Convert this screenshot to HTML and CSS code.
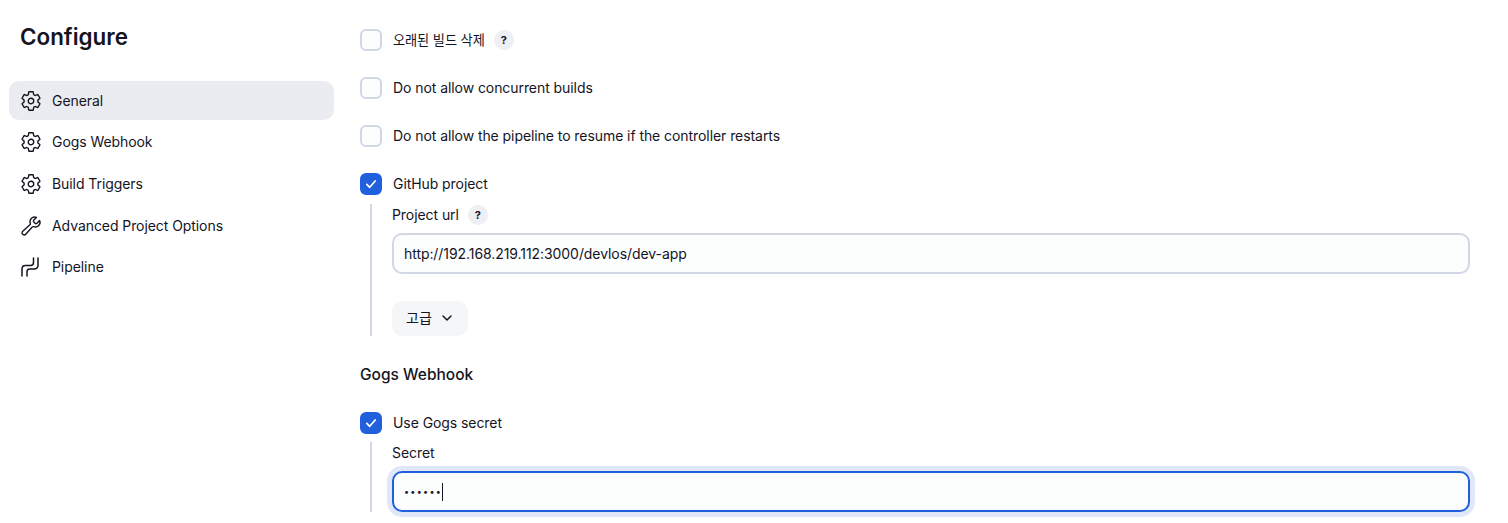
FILE: index.html
```html
<!DOCTYPE html>
<html lang="ko">

<head>
  <meta charset="UTF-8">
  <meta name="viewport" content="width=device-width, initial-scale=1.0">
  <title>Configure</title>
  <link rel="stylesheet" href="styles.css">
</head>

<body>
  <svg class="defs" width="0" height="0" aria-hidden="true">
    <symbol id="icon-gear" viewBox="0 0 512 512">
      <path d="M262.29 192.31a64 64 0 1057.4 57.4 64.13 64.13 0 00-57.4-57.4zM416.39 256a154.34 154.34 0 01-1.53 20.79l45.21 35.46a10.81 10.81 0 012.45 13.75l-42.77 74a10.81 10.81 0 01-13.14 4.59l-44.9-18.08a16.11 16.11 0 00-15.17 1.75A164.48 164.48 0 01325 400.8a15.94 15.94 0 00-8.82 12.14l-6.73 47.89a11.08 11.08 0 01-10.68 9.17h-85.54a11.11 11.11 0 01-10.69-8.87l-6.72-47.82a16.07 16.07 0 00-9-12.22 155.3 155.3 0 01-21.46-12.57 16 16 0 00-15.11-1.71l-44.89 18.07a10.81 10.81 0 01-13.14-4.58l-42.77-74a10.8 10.8 0 012.45-13.75l38.21-30a16.05 16.05 0 006-14.08c-.36-4.17-.58-8.33-.58-12.5s.21-8.27.58-12.35a16 16 0 00-6.07-13.94l-38.19-30A10.81 10.81 0 0149.48 186l42.77-74a10.81 10.81 0 0113.14-4.59l44.9 18.08a16.11 16.11 0 0015.17-1.75A164.48 164.48 0 01187 111.2a15.94 15.94 0 008.82-12.14l6.73-47.89A11.08 11.08 0 01213.23 42h85.54a11.11 11.11 0 0110.69 8.87l6.72 47.82a16.07 16.07 0 009 12.22 155.3 155.3 0 0121.46 12.57 16 16 0 0015.11 1.71l44.89-18.07a10.81 10.81 0 0113.14 4.58l42.77 74a10.8 10.8 0 01-2.45 13.75l-38.21 30a16.05 16.05 0 00-6.05 14.08c.33 4.14.55 8.3.55 12.47z" />
    </symbol>
    <symbol id="icon-check" viewBox="0 0 22 22">
      <path d="M6.8 11.4l2.9 2.9 5.5-6.3" />
    </symbol>
  </svg>

  <div class="page">
    <aside class="sidebar">
      <h1>Configure</h1>
      <nav class="side-nav">
        <a class="nav-item active">
          <svg class="nav-icon"><use href="#icon-gear" /></svg>
          General
        </a>
        <a class="nav-item">
          <svg class="nav-icon"><use href="#icon-gear" /></svg>
          Gogs Webhook
        </a>
        <a class="nav-item">
          <svg class="nav-icon"><use href="#icon-gear" /></svg>
          Build Triggers
        </a>
        <a class="nav-item">
          <svg class="nav-icon" viewBox="0 0 512 512">
            <path d="M393.87 190a32.1 32.1 0 01-45.25 0l-26.57-26.57a32.09 32.09 0 010-45.26L382.19 58a1 1 0 00-.3-1.64c-38.82-16.64-89.15-8.16-121.11 23.57-30.58 30.35-32.32 76-21.12 115.84a31.93 31.93 0 01-9.06 32.08L64 380a48.17 48.17 0 1068 68l153.86-167a31.93 31.93 0 0131.6-9.13c39.54 10.59 84.54 8.6 114.72-21.19 32.49-32 39.5-88.56 23.75-120.93a1 1 0 00-1.6-.26z" />
          </svg>
          Advanced Project Options
        </a>
        <a class="nav-item">
          <svg class="nav-icon pipeline-icon" viewBox="0 0 22 22">
            <path d="M13.5 2v4.5q0 3-3 3H5.5q-3.5 0-3.5 3.5v7" />
            <path d="M18 2v7q0 4-4 4H9.5Q7 13 7 15.8V20" />
          </svg>
          Pipeline
        </a>
      </nav>
    </aside>

    <main class="content">
      <label class="check-row">
        <span class="checkbox"></span>
        <span class="ko-label">오래된 빌드 삭제</span>
        <span class="help">?</span>
      </label>
      <label class="check-row">
        <span class="checkbox"></span>
        <span>Do not allow concurrent builds</span>
      </label>
      <label class="check-row">
        <span class="checkbox"></span>
        <span>Do not allow the pipeline to resume if the controller restarts</span>
      </label>
      <label class="check-row">
        <span class="checkbox checked"><svg><use href="#icon-check" /></svg></span>
        <span>GitHub project</span>
      </label>

      <div class="nested nested-project">
        <div class="field-label">
          <span>Project url</span>
          <span class="help">?</span>
        </div>
        <div class="text-input">http://192.168.219.112:3000/devlos/dev-app</div>
        <button class="advanced-btn">
          고급
          <svg viewBox="0 0 12 12"><path d="M2 4l4 4 4-4" /></svg>
        </button>
      </div>

      <h2>Gogs Webhook</h2>

      <label class="check-row">
        <span class="checkbox checked"><svg><use href="#icon-check" /></svg></span>
        <span>Use Gogs secret</span>
      </label>

      <div class="nested nested-secret">
        <div class="field-label">
          <span>Secret</span>
        </div>
        <div class="text-input focused"><span class="dots">••••••</span><span class="caret"></span></div>
      </div>
    </main>
  </div>
</body>

</html>
```

FILE: styles.css
```css
* {
  box-sizing: border-box;
}

html,
body {
  height: 523px;
  overflow: hidden;
}

body {
  margin: 0;
  font-family: Inter, "Noto Sans CJK KR", sans-serif;
  font-size: 14px;
  font-weight: 400;
  letter-spacing: -0.07px;
  line-height: 22px;
  color: #14141f;
  background-color: #fff;
}

.defs {
  position: absolute;
}

.page {
  display: flex;
}

/* sidebar */
.sidebar {
  width: 325px;
  margin-left: 9px;
  flex: none;
}

h1 {
  margin: 20px 0 27px 11px;
  font-size: 22.4px;
  font-weight: 600;
  letter-spacing: 0;
  line-height: 34px;
}

.side-nav {
  display: flex;
  flex-direction: column;
  gap: 2.7px;
}

.nav-item {
  display: flex;
  align-items: center;
  gap: 10px;
  height: 39px;
  padding-left: 11px;
  border-radius: 10px;
}

.nav-item.active {
  background-color: #ebecf1;
}

.nav-icon {
  width: 22px;
  height: 22px;
  flex: none;
  fill: none;
  stroke: #14141f;
  stroke-width: 32;
  stroke-linecap: round;
  stroke-linejoin: round;
}

.pipeline-icon {
  stroke-width: 1.5;
}

/* main column */
.content {
  flex: 1;
  margin-left: 26px;
  margin-right: 38px;
  padding-top: 29px;
}

.check-row {
  display: flex;
  align-items: center;
  height: 22px;
  margin-bottom: 26px;
}

.checkbox {
  width: 22px;
  height: 22px;
  margin-right: 11px;
  flex: none;
  background-color: #fcfdfd;
  border: 2px solid #d2d7e5;
  border-radius: 6px;
}

.checkbox.checked {
  background-color: #2160dd;
  border-color: #2160dd;
}

.checkbox svg {
  display: block;
  width: 22px;
  height: 22px;
  margin: -2px;
  fill: none;
  stroke: #fff;
  stroke-width: 1.7;
  stroke-linecap: round;
  stroke-linejoin: round;
}

.ko-label {
  font-size: 13.2px;
}

.help {
  display: flex;
  align-items: center;
  justify-content: center;
  width: 20px;
  height: 20px;
  margin-left: 9px;
  font-size: 11px;
  font-weight: 700;
  background-color: #eeeff3;
  border-radius: 50%;
}

.nested {
  margin-top: -17px;
  margin-left: 10px;
  padding-left: 20px;
  border-left: 2px solid #d2d7e5;
}

.nested-project {
  height: 132px;
}

.nested-secret {
  margin-top: -18px;
}

.field-label {
  display: flex;
  align-items: center;
  height: 22px;
  margin-bottom: 7px;
}

.text-input {
  display: flex;
  align-items: center;
  height: 41px;
  padding-left: 10px;
  background-color: #fcfdfd;
  border: 2px solid #d2d7e5;
  border-radius: 10px;
}

.text-input.focused {
  border-color: #2160dd;
  box-shadow: 0 0 0 5px #dfe7f9;
}

.dots {
  font-size: 9px;
  letter-spacing: 1.3px;
}

.caret {
  width: 1px;
  height: 18px;
  background-color: #14141f;
}

.advanced-btn {
  display: flex;
  align-items: center;
  gap: 9px;
  height: 35px;
  margin-top: 27px;
  padding: 0 15px 2px 14px;
  font: inherit;
  color: inherit;
  background-color: #f5f6f8;
  border: none;
  border-radius: 10px;
}

.advanced-btn svg {
  width: 12px;
  height: 12px;
  fill: none;
  stroke: #14141f;
  stroke-width: 1.5;
  stroke-linecap: round;
  stroke-linejoin: round;
}

h2 {
  margin: 27px 0 25px;
  font-size: 15.5px;
  font-weight: 500;
  letter-spacing: 0;
  line-height: 24px;
}
```
